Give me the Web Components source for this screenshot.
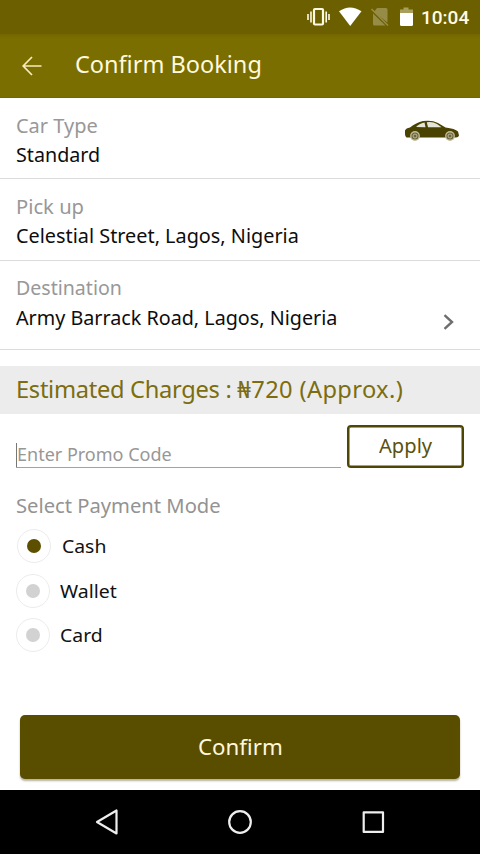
<!DOCTYPE html>
<html lang="en">
<head>
<meta charset="utf-8">
<title>Confirm Booking</title>
<style>
html,body{margin:0;height:100%}
body{font-family:"Noto Sans","Open Sans",sans-serif;background:#fff;overflow:hidden}
</style>
</head>
<body>
<booking-screen></booking-screen>
<script>
class Base extends HTMLElement{
  constructor(){super();this.attachShadow({mode:'open'}).innerHTML=this.view();}
}
const define=(name,view)=>customElements.define(name,class extends Base{view(){return view(this);}});

// A single line of text whose glyphs are widened to span a given width.
customElements.define('fit-text',class extends HTMLElement{
  constructor(){
    super();
    this.attachShadow({mode:'open'}).innerHTML='<style>:host{display:block;white-space:nowrap}span{display:inline-block;transform-origin:0 50%}</style><span><slot></slot></span>';
  }
  connectedCallback(){
    const s=this.shadowRoot.querySelector('span');
    const want=+this.getAttribute('span');
    this.style.width=want+'px';
    const fit=()=>{const w=s.offsetWidth;if(w)s.style.transform=`scaleX(${(want/w).toFixed(4)})`;};
    fit();
    this.shadowRoot.querySelector('slot').addEventListener('slotchange',fit);
  }
});

define('status-bar',()=>`<style>
:host{display:flex;height:34px;box-sizing:border-box;background:#6b5f00;align-items:center;justify-content:flex-end;padding-right:11px;color:#fffbe6;font:500 19px Roboto,sans-serif}
svg{display:block}
</style>
<svg width="114" height="34" viewBox="0 0 114 34">
<g fill="none" stroke="#fffbe0" stroke-width="2"><rect x="7" y="9" width="9" height="15.5" rx="1" stroke-width="2.2"/><path d="M4 11.5v11M19.200 11.5v11M1 14v6M22 14v6" stroke-width="1.6"/></g>
<path d="M32 11.300Q43 3.500 54.500 11.300L43.200 26z" fill="#fff"/>
<path d="M70 8h9q1.500 0 1.500 1.500v13L67 12z M66 13.500L78.500 25.500H67.500q-1.500 0-1.500-1.500z" fill="#978c47"/><path d="M64.500 9L81 25.500" stroke="#978c47" stroke-width="1.6"/>
<path d="M93 13V9.500h3.500V7.500h5V9.500H106V13z" fill="#a99f5c"/><path d="M93 13h13v11.500q0 1.500-1.500 1.500H94.500q-1.500 0-1.500-1.500z" fill="#fff"/>
</svg><fit-text span="48"><slot></slot></fit-text>`);

define('app-bar',()=>`<style>
:host{display:flex;height:64px;box-sizing:border-box;align-items:center;background:linear-gradient(#736600,#7b6e00 4px);color:#fff9df;padding:0 0 3px 22px;font-size:23px;line-height:30px;border-bottom:1px solid #6c631c}
svg{margin:3px 32.500px 0 0}
</style>
<svg width="20" height="20" viewBox="0 0 20 20" fill="none" stroke="#f7edbb" stroke-width="1.7"><path d="M19.500 10H1.500M10 1L1.200 10L10 19"/></svg>
<fit-text span="187"><slot></slot></fit-text>`);

define('info-row',e=>`<style>
:host{display:flex;box-sizing:border-box;height:${e.getAttribute('height')}px;border-bottom:1.500px solid #dcdcdc;padding:${e.getAttribute('top')}px 20px 0 16px;font-size:19px;line-height:29.500px;color:#0d0d0d;justify-content:space-between}
.l{color:#989898}
</style><div><div class="l"><slot name="label"></slot></div><slot></slot></div><slot name="icon"></slot>`);

define('car-icon',()=>`<style>:host{display:block;margin-top:8px}svg{display:block}</style>
<svg width="56" height="22" viewBox="0 0 56 22">
<path d="M1 10.500Q2 8 6 7.500Q12 2.500 19 1Q28-.3 34 3L41.500 7.500Q51 8.500 54 11.500L55 15.500Q54.500 17.500 52 17.500H2.500Q1 17 1 14z" fill="#4a4200"/>
<path d="M12 7Q15 3.500 20.500 2.500L21.500 7.300zM22.800 2.300Q29 1.500 33 4L37.500 7.300L24 7.300z" fill="#e6e5da"/>
<circle cx="11" cy="16" r="4.900" fill="#c2bc98"/><circle cx="46" cy="16" r="4.900" fill="#c2bc98"/>
<circle cx="11" cy="16" r="3.600" fill="#6b653e"/><circle cx="46" cy="16" r="3.600" fill="#6b653e"/>
<circle cx="11" cy="16" r="2" fill="none" stroke="#bdb891"/><circle cx="46" cy="16" r="2" fill="none" stroke="#bdb891"/></svg>`);

define('chevron-icon',()=>`<style>:host{display:block;margin:40px 5px 0 0}svg{display:block}</style>
<svg width="12" height="16" viewBox="0 0 12 16" fill="none" stroke="#6e6e6e" stroke-width="2.400"><path d="M1.500 1.200L9 8L1.500 14.800"/></svg>`);

define('charge-band',()=>`<style>
:host{display:flex;align-items:center;box-sizing:border-box;height:48px;margin-top:16px;padding:0 0 2px 16px;background:#ececec;color:#7b6d10;font-size:23px;line-height:30px}
</style><fit-text span="387"><slot></slot></fit-text>`);

define('promo-form',()=>`<style>
:host{display:flex;padding:11px 16px 0 16px;justify-content:space-between;height:43px}
.field{width:325px;box-sizing:border-box;height:43px;border-bottom:1.500px solid #a2a2a2;padding-top:18px;color:#979797;font-size:18px;line-height:23px}
.in{border-left:1px solid #777;height:24px}
.btn{box-sizing:border-box;width:117px;height:43px;border:2px solid #4d4605;border-radius:4px;box-shadow:inset 0 0 0 .5px #4d4605;color:#5a520d;font-size:19px;display:flex;justify-content:center;line-height:39px}
</style><div class="field"><div class="in"><fit-text span="155">Enter Promo Code</fit-text></div></div>
<div class="btn"><fit-text span="53">Apply</fit-text></div>`);

define('pay-option',e=>{const on=e.hasAttribute('checked');return `<style>
:host{display:flex;align-items:center;height:44.700px;padding-left:${on?17:16}px;color:#111;font-size:18.500px;line-height:30px}
.r{box-sizing:border-box;width:34px;height:34px;border:1.500px solid #ececec;border-radius:50%;display:grid;place-items:center;margin-right:${on?11:10}px}
.r::after{content:"";width:14px;height:14px;border-radius:50%;background:${on?'#5c4f00':'#d2d2d2'}}
</style><div class="r"></div><slot></slot>`;});

define('payment-modes',()=>`<style>
:host{display:block;padding-top:23px}
.t{font-size:19px;line-height:30px;color:#939393;padding-left:16px;margin-bottom:2.500px}
</style><div class="t"><fit-text span="205">Select Payment Mode</fit-text></div>
<pay-option checked><fit-text span="44">Cash</fit-text></pay-option>
<pay-option><fit-text span="57">Wallet</fit-text></pay-option>
<pay-option><fit-text span="43">Card</fit-text></pay-option>`);

define('confirm-button',()=>`<style>
:host{display:flex;justify-content:center;align-items:center;box-sizing:border-box;height:64px;margin:auto 20px 11px;border-radius:5px;background:#594e00;color:#fff8df;font-size:21.500px;line-height:30px;box-shadow:0 2px 2px rgba(70,65,20,.4)}
</style><fit-text span="85"><slot></slot></fit-text>`);

define('nav-bar',()=>`<style>
:host{display:block;height:64px;background:#000;flex:none}svg{display:block}
</style><svg width="480" height="64" viewBox="0 0 480 64" fill="none" stroke="#eee" stroke-width="2.200" stroke-linejoin="round"><path d="M116.500 20.500V43.500L97 32z"/><circle cx="240" cy="32" r="10.800"/><rect x="363.700" y="22.300" width="19.300" height="19.600"/></svg>`);

define('booking-screen',()=>`<style>
:host{display:flex;flex-direction:column;width:480px;height:854px;background:#fff}
:host>*{flex:none}
.a{letter-spacing:-.3px}.b{letter-spacing:.35px}
</style>
<status-bar>10:04</status-bar>
<app-bar>Confirm Booking</app-bar>
<info-row height="81" top="13.500"><fit-text slot="label" span="82">Car Type</fit-text><fit-text span="84">Standard</fit-text><car-icon slot="icon"></car-icon></info-row>
<info-row height="82" top="13.500"><fit-text slot="label" span="68">Pick up</fit-text><fit-text span="283">Celestial Street, Lagos, Nigeria</fit-text></info-row>
<info-row height="89" top="13"><fit-text slot="label" span="106">Destination</fit-text><fit-text span="321">Army Barrack Road, Lagos, Nigeria</fit-text><chevron-icon slot="icon"></chevron-icon></info-row>
<charge-band><span class="a">Estimated Charges : </span><span class="b">₦720 (Approx.)</span></charge-band>
<promo-form></promo-form>
<payment-modes></payment-modes>
<confirm-button>Confirm</confirm-button>
<nav-bar></nav-bar>`);
</script>
</body>
</html>
